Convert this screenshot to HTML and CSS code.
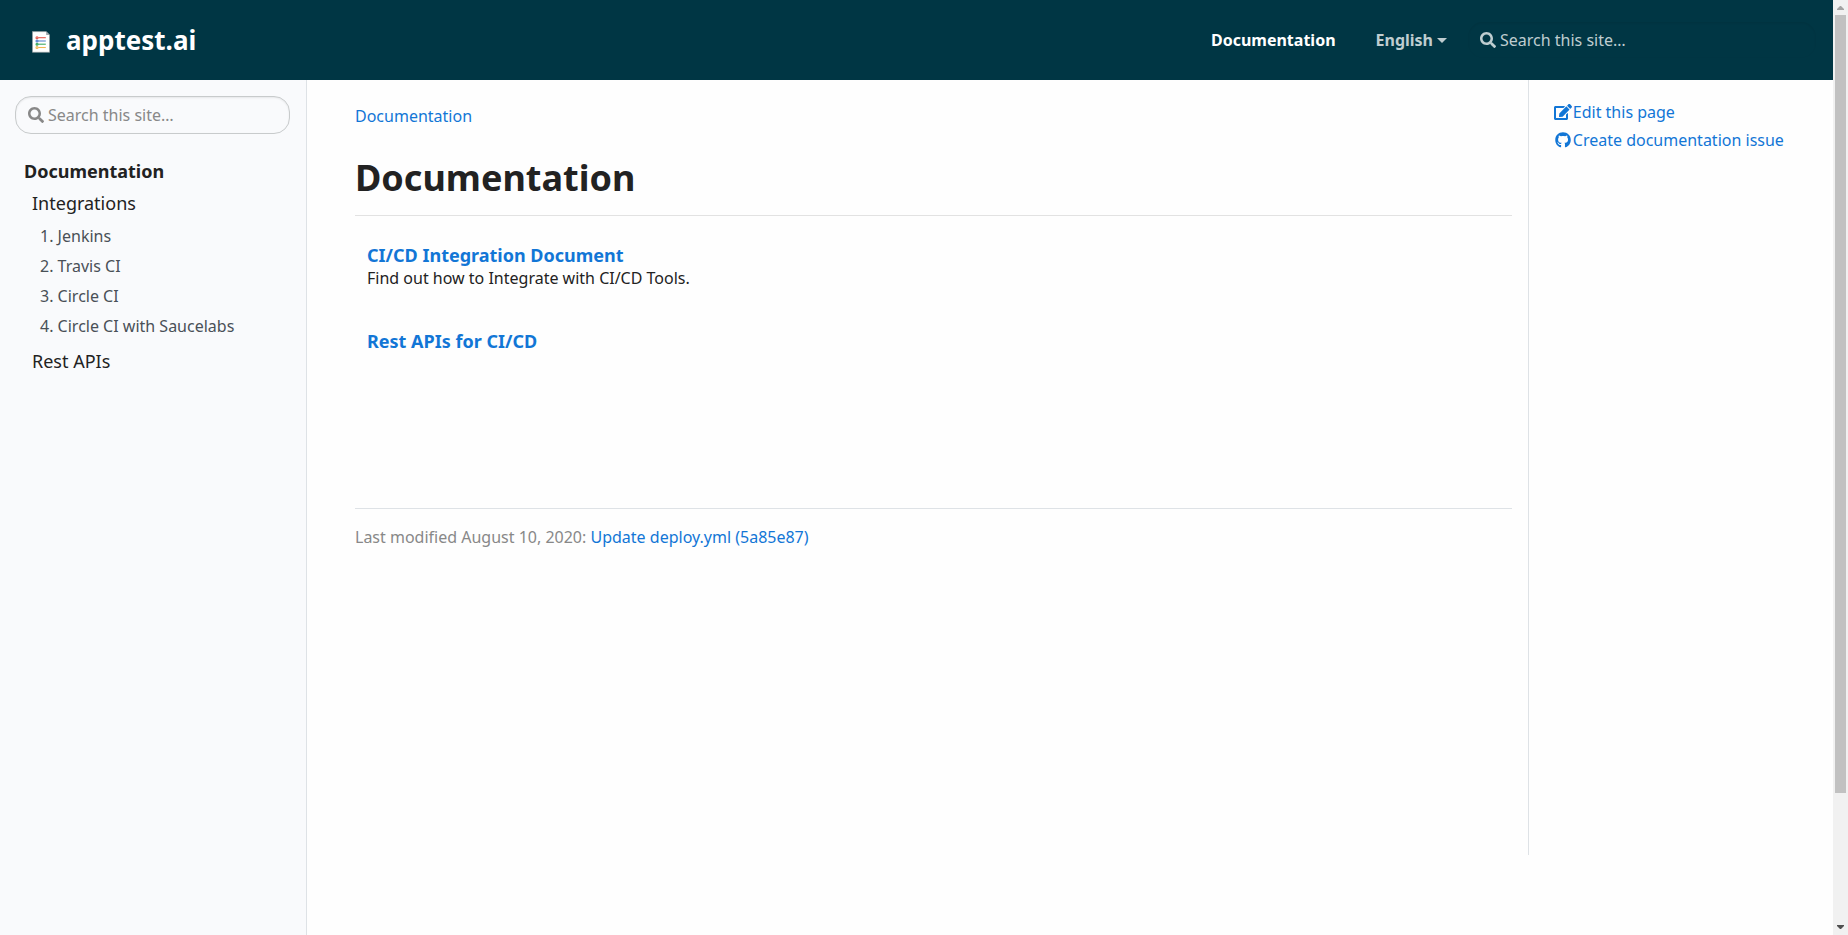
FILE: index.html
```html
<!DOCTYPE html>
<html lang="en">
<head>
<meta charset="utf-8">
<meta name="viewport" content="width=device-width, initial-scale=1">
<title>Documentation | apptest.ai</title>
<link rel="stylesheet" href="styles.css">
</head>
<body>
<svg class="sprite" aria-hidden="true">
  <symbol id="search" viewBox="0 0 512 512"><path fill="currentColor" d="M505 442.700L405.300 343c-4.500-4.500-10.600-7-17-7H372c27.600-35.300 44-79.700 44-128C416 93.100 322.900 0 208 0S0 93.100 0 208s93.100 208 208 208c48.300 0 92.700-16.400 128-44v16.300c0 6.400 2.500 12.500 7 17l99.700 99.700c9.400 9.400 24.600 9.400 33.900 0l28.300-28.300c9.400-9.400 9.400-24.600.1-34zM208 336c-70.700 0-128-57.200-128-128 0-70.700 57.200-128 128-128 70.700 0 128 57.200 128 128 0 70.700-57.200 128-128 128z"/></symbol>
</svg>
<div class="page">
<header class="navbar">
  <a class="brand" href="#">
    <svg class="brand-logo" viewBox="0 0 18 22" aria-hidden="true">
      <path fill="#fff" stroke="#8d9799" stroke-width=".7" d="M.4.6h13.800l3.400 3.400v17.300H.4z"/>
      <path fill="#9aa5a8" d="M14.200.6v3.400h3.400z"/>
      <g fill="none" stroke-width="1.100">
        <path stroke="#e2574c" d="M6.200 6.700h7.600"/><circle cx="5" cy="6.700" r="1" stroke="#e2574c"/>
        <path stroke="#5c86cf" d="M4 10h9.800"/><circle cx="5" cy="10" r="1" stroke="#5c86cf"/>
        <path stroke="#3faa63" d="M4 13.200h9.800"/><circle cx="5" cy="13.200" r="1" stroke="#3faa63"/>
        <path stroke="#f2b652" d="M6.200 16.500h7.600"/><circle cx="5" cy="16.500" r="1" stroke="#f2b652"/>
      </g>
    </svg>
    <span>apptest.ai</span>
  </a>
  <nav class="menu" aria-label="Main">
    <a class="menu-link active" href="#">Documentation</a>
    <button class="menu-link dropdown" type="button" aria-haspopup="true">English</button>
  </nav>
  <label class="search search-dark">
    <svg class="icon" aria-hidden="true"><use href="#search"/></svg>
    <input type="search" placeholder="Search this site…" aria-label="Search this site">
  </label>
</header>
<div class="layout">
  <aside class="sidebar">
    <label class="search">
      <svg class="icon" aria-hidden="true"><use href="#search"/></svg>
      <input type="search" placeholder="Search this site…" aria-label="Search documentation">
    </label>
    <nav class="tree" aria-label="Section">
      <a class="tree-root" href="#">Documentation</a>
      <a class="tree-section" href="#">Integrations</a>
      <ul class="tree-pages">
        <li><a href="#">1. Jenkins</a></li>
        <li><a href="#">2. Travis CI</a></li>
        <li><a href="#">3. Circle CI</a></li>
        <li><a href="#">4. Circle CI with Saucelabs</a></li>
      </ul>
      <a class="tree-section" href="#">Rest APIs</a>
    </nav>
  </aside>
  <main class="content">
    <nav class="breadcrumb" aria-label="Breadcrumb"><a href="#">Documentation</a></nav>
    <h1>Documentation</h1>
    <hr>
    <section class="entries">
      <div class="entry">
        <h2><a href="#">CI/CD Integration Document</a></h2>
        <p>Find out how to Integrate with CI/CD Tools.</p>
      </div>
      <div class="entry">
        <h2><a href="#">Rest APIs for CI/CD</a></h2>
        <p></p>
      </div>
    </section>
    <div class="modified">Last modified August 10, 2020: <a href="#">Update deploy.yml (5a85e87)</a></div>
  </main>
  <aside class="page-meta">
    <a href="#"><svg class="meta-icon" viewBox="0 0 576 512" aria-hidden="true"><path fill="currentColor" d="M402.600 83.200l90.200 90.200c3.800 3.800 3.800 10 0 13.800L274.400 405.600l-92.800 10.300c-12.400 1.400-22.900-9.100-21.500-21.500l10.300-92.800L388.800 83.200c3.800-3.800 10-3.800 13.800 0zm162-22.900l-48.800-48.800c-15.200-15.200-39.900-15.200-55.200 0l-35.400 35.400c-3.800 3.800-3.800 10 0 13.800l90.200 90.200c3.800 3.800 10 3.800 13.800 0l35.400-35.400c15.200-15.300 15.200-40 0-55.200zM384 346.200V448H64V128h229.800c3.200 0 6.200-1.300 8.500-3.500l40-40c7.600-7.600 2.200-20.500-8.500-20.500H48C21.500 64 0 85.500 0 112v352c0 26.500 21.500 48 48 48h352c26.500 0 48-21.500 48-48V306.200c0-10.700-12.900-16-20.500-8.500l-40 40c-2.200 2.300-3.500 5.300-3.500 8.500z"/></svg>Edit this page</a>
    <a href="#"><svg class="meta-icon" viewBox="0 0 496 512" aria-hidden="true"><path fill="currentColor" d="M248 8C106 8 0 113 0 252c0 111 70 205 169.500 238 13 2.300 17.500-5.700 17.500-12.300 0-6.200-.3-40.400-.3-61.400 0 0-70 15-84.700-29.800 0 0-11.400-29.100-27.800-36.600 0 0-22.900-15.700 1.600-15.400 0 0 24.900 2 38.600 25.800 21.900 38.600 58.600 27.500 72.900 20.900 2.300-16 8.800-27.100 16-33.700-55.900-6.200-112.300-14.300-112.300-110.500 0-27.500 7.600-41.300 23.600-58.900-2.600-6.500-11.100-33.300 2.600-67.900 20.900-6.500 69 27 69 27 20-5.600 41.500-8.500 62.800-8.500s42.800 2.900 62.800 8.500c0 0 48.100-33.600 69-27 13.700 34.700 5.200 61.400 2.600 67.900 16 17.700 25.800 31.500 25.800 58.900 0 96.500-58.900 104.200-114.800 110.500 9.200 7.900 17 22.900 17 46.400 0 33.700-.3 75.400-.3 83.600 0 6.500 4.600 14.400 17.300 12.100C428.200 457 496 363 496 252 496 113 389 8 248 8z"/></svg>Create documentation issue</a>
  </aside>
</div>
</div>
<div class="scrollbar" aria-hidden="true">
  <svg class="scroll-arrow" viewBox="0 0 15 15"><path fill="#a3a3a3" d="M4 10V9L7 6h1l3 3v1z"/></svg>
  <div class="scroll-track"><div class="scroll-thumb"></div></div>
  <svg class="scroll-arrow" viewBox="0 0 15 15"><path fill="#505050" d="M4 5v1l3 3h1l3-3V5z"/></svg>
</div>
</body>
</html>
```
FILE: styles.css
```css
* { box-sizing: border-box; }
body {
  display: flex;
  height: 100vh;
  margin: 0;
  font: 16px/24px "Noto Sans", sans-serif;
  color: #222;
  background: #fefefe;
}
a { color: #1276d6; text-decoration: none; }
.sprite { display: none; }

.page {
  flex: 1;
  min-width: 0;
  display: flex;
  flex-direction: column;
}

.navbar {
  flex: none;
  height: 80px;
  padding: 0 16px 0 32px;
  display: flex;
  align-items: center;
  background: #003644;
}
.brand {
  display: flex;
  align-items: center;
  gap: 16px;
  color: #fff;
  font-size: 26px;
  font-weight: 700;
  margin-right: auto;
}
.brand-logo { width: 18px; height: 22px; margin-top: 4px; }
.menu { display: flex; gap: 40px; }
.menu-link {
  padding: 0;
  border: 0;
  background: none;
  font: inherit;
  font-weight: 700;
  color: #bfcdd0;
}
.menu-link.active { color: #fff; }
.dropdown { display: flex; align-items: center; gap: 4px; }
.dropdown::after {
  content: "";
  border: 5px solid transparent;
  border-top-color: currentColor;
  border-bottom: 0;
}

.search {
  display: flex;
  align-items: center;
  gap: 4px;
  height: 38px;
  padding: 0 12px;
  border: 1px solid #c8cbcc;
  border-radius: 16px;
  box-shadow: inset 0 1px 2px rgba(0, 0, 0, .08);
  color: #888;
}
.icon { width: 16px; height: 16px; flex: none; }
.search input {
  flex: 1;
  min-width: 0;
  padding: 0;
  border: 0;
  outline: 0;
  background: none;
  font: inherit;
  color: inherit;
}
.search input::placeholder { color: inherit; opacity: 1; }
.search-dark {
  width: 350px;
  margin-left: 20px;
  border-color: transparent;
  color: #bfcdd0;
}

.layout {
  flex: 1;
  display: grid;
  grid-template-columns: 2fr 8fr 2fr;
}
.sidebar {
  padding: 16px 16px 16px 15px;
  border-right: 1px solid #dee2e6;
  background: #f9fafc;
}
.tree { padding: 24px 9px; }
.tree a { display: block; color: #222; }
.tree .tree-root { padding: 1px 0 8px; font-size: 18px; font-weight: 700; }
.tree .tree-section { padding-left: 8px; font-size: 18px; }
.tree-pages { list-style: none; margin: 6px 0 8px; padding: 0 0 0 16px; }
.tree-pages a { padding: 3px 0; color: #495057; }

.content { padding: 24px 16px 24px 48px; }
h1 { margin: 26px 0 13px; font-size: 36px; line-height: 48px; }
hr { margin: 0; border: 0; border-top: 1px solid #e2e2e2; }
.entries { padding: 28px 12px 0; }
.entry { margin-bottom: 40px; }
.entry h2 { margin: 0; font-size: 18px; line-height: 22px; }
.entry p { margin: 0; min-height: 24px; }
.modified {
  margin-top: 132px;
  padding-top: 16px;
  border-top: 1px solid #dee2e6;
  color: #888;
}

.page-meta {
  height: calc(100vh - 160px);
  padding: 20px 24px;
  border-left: 1px solid #dee2e6;
  display: flex;
  flex-direction: column;
  gap: 4px;
}
.page-meta a { display: flex; align-items: center; }
.meta-icon { width: 20px; height: 16px; }

.scrollbar {
  flex: none;
  width: 15px;
  display: flex;
  flex-direction: column;
  background: #f1f1f1;
}
.scroll-arrow { width: 15px; height: 15px; }
.scroll-track { flex: 1; padding: 0 2px; }
.scroll-thumb { height: 86%; background: #c1c1c1; }
```
